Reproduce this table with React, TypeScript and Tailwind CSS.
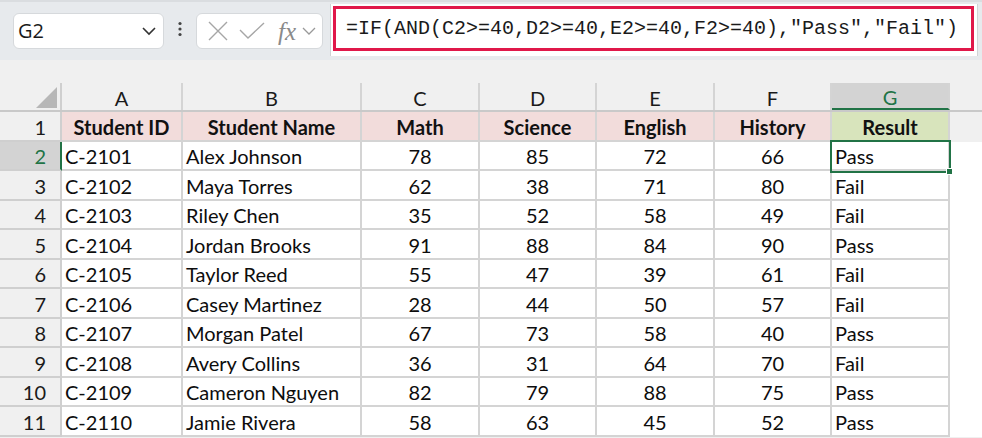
const cols = ["A", "B", "C", "D", "E", "F", "G"];
const widths = ["w-[121px]", "w-[179px]", "w-[118px]", "w-[117px]", "w-[118px]", "w-[117px]", "w-[118px]"];

const headers = ["Student ID", "Student Name", "Math", "Science", "English", "History", "Result"];

const rows: [string, string, number, number, number, number, string][] = [
  ["C-2101", "Alex Johnson", 78, 85, 72, 66, "Pass"],
  ["C-2102", "Maya Torres", 62, 38, 71, 80, "Fail"],
  ["C-2103", "Riley Chen", 35, 52, 58, 49, "Fail"],
  ["C-2104", "Jordan Brooks", 91, 88, 84, 90, "Pass"],
  ["C-2105", "Taylor Reed", 55, 47, 39, 61, "Fail"],
  ["C-2106", "Casey Martinez", 28, 44, 50, 57, "Fail"],
  ["C-2107", "Morgan Patel", 67, 73, 58, 40, "Pass"],
  ["C-2108", "Avery Collins", 36, 31, 64, 70, "Fail"],
  ["C-2109", "Cameron Nguyen", 82, 79, 88, 75, "Pass"],
  ["C-2110", "Jamie Rivera", 58, 63, 45, 52, "Pass"],
];

const cellFont = { fontFamily: "Lato, 'Liberation Sans', sans-serif" };

function Toolbar() {
  return (
    <div className="h-[60px] bg-[#e7eaed] border-t-2 border-[#dadde0] flex items-start relative" style={{ fontFamily: "'Open Sans', 'Noto Sans', sans-serif" }}>
      {/* name box */}
      <div className="ml-[13px] mt-[11px] w-[151px] h-[36px] bg-white rounded-md border border-[#d6d9dc] flex items-center justify-between pl-[4px] pr-[6px]">
        <span className="text-[20px] text-[#1a1a1a]">G2</span>
        <svg width="16" height="10" viewBox="0 0 16 10" fill="none">
          <path d="M2 2l6 6 6-6" stroke="#333" strokeWidth="1.6" />
        </svg>
      </div>
      <div className="w-[32px] h-[60px] flex items-center justify-center -mt-[3px]">
        <svg width="6" height="16" viewBox="0 0 6 16">
          <circle cx="3" cy="2.5" r="1.6" fill="#444" />
          <circle cx="3" cy="8" r="1.6" fill="#444" />
          <circle cx="3" cy="13.5" r="1.6" fill="#444" />
        </svg>
      </div>
      {/* fx box */}
      <div className="mt-[11px] w-[127px] h-[36px] bg-white rounded-md border border-[#d6d9dc] flex items-center pl-[10px]">
        <svg width="22" height="20" viewBox="0 0 22 20" fill="none">
          <path d="M2 1l18 18M20 1L2 19" stroke="#a6a6a6" strokeWidth="1.4" />
        </svg>
        <svg width="26" height="18" viewBox="0 0 26 18" fill="none" className="ml-[10px]">
          <path d="M1 8l8 8L25 1" stroke="#a6a6a6" strokeWidth="1.4" />
        </svg>
        <span className="ml-[13px] text-[25px] italic text-[#8a8a8a] leading-none" style={{ fontFamily: "'Liberation Serif', serif" }}>fx</span>
        <svg width="14" height="8" viewBox="0 0 14 8" fill="none" className="ml-[6px]">
          <path d="M1 1l6 6 6-6" stroke="#999" strokeWidth="1.3" />
        </svg>
      </div>
      {/* formula */}
      <div className="ml-[7px] mt-[2px] w-[648px] h-[52px] bg-white border-l border-r border-[#d0d3d6] relative">
        <div className="absolute left-[2px] top-[2px] w-[641px] h-[45px] border-[3px] border-[#e0184a] flex items-center pl-[10px]">
          <span className="text-[20px] text-[#1a1a1a] whitespace-nowrap" style={{ fontFamily: "'Liberation Mono', 'DejaVu Sans Mono', monospace" }}>
            =IF(AND(C2&gt;=40,D2&gt;=40,E2&gt;=40,F2&gt;=40),"Pass","Fail")
          </span>
        </div>
      </div>
    </div>
  );
}

export default function App() {
  return (
    <div className="w-[982px] h-[438px] overflow-hidden bg-[#f0f0f0]">
      <Toolbar />
      <div className="h-[23px]" />
      {/* column headers */}
      <div className="flex h-[29px] border-b-2 border-[#c9c9c9]" style={cellFont}>
        <div className="w-[62px] h-full border-r-2 border-[#cfcfcf] flex items-end justify-end pr-[2px] pb-[1px]">
          <svg width="23" height="23" viewBox="0 0 23 23">
            <path d="M22 1V22H1Z" fill="#b7b7b7" />
          </svg>
        </div>
        {cols.map((c, i) => (
          <div
            key={c}
            className={`${widths[i]} h-full border-r-2 border-[#d4d4d4] flex items-center justify-center pt-[2px] text-[20px] ${
              c === "G" ? "bg-[#d3d3d3] text-[#217346] border-b-2 border-b-[#217346] h-[29px]" : "text-[#1a1a1a]"
            }`}
          >
            {c}
          </div>
        ))}
      </div>
      <div style={cellFont}>
        {/* row 1 */}
        <div className="flex h-[29.5px]">
          <div className="w-[62px] border-r-2 border-b-2 border-[#cfcfcf] flex items-center justify-end pr-[14px] pt-[2px] text-[20px] text-[#1a1a1a]">1</div>
          {headers.map((h, i) => (
            <div
              key={h}
              className={`${widths[i]} border-r-2 border-b-2 border-[#d4d4d4] flex items-center justify-center pt-[2px] text-[20px] font-bold text-[#111] ${
                i === 6 ? "bg-[#d8e4bc]" : "bg-[#f2dcdb]"
              }`}
            >
              {h}
            </div>
          ))}
        </div>
        {rows.map((r, ri) => {
          const n = ri + 2;
          const sel = n === 2;
          return (
            <div key={n} className="flex h-[29.5px]">
              <div
                className={`w-[62px] border-b-2 border-[#cfcfcf] flex items-center justify-end pr-[14px] pt-[2px] text-[20px] ${
                  sel ? "bg-[#d3d3d3] text-[#217346] border-r-2 border-r-[#217346]" : "text-[#1a1a1a] border-r-2"
                }`}
              >
                {n}
              </div>
              {r.map((v, ci) => (
                <div
                  key={ci}
                  className={`${widths[ci]} relative bg-white border-r-2 border-b-2 border-[#d4d4d4] flex items-center pt-[2px] text-[20px] text-[#0d0d0d] ${
                    typeof v === "number" ? "justify-center" : "pl-[3px]"
                  } ${sel && ci === 6 ? "z-10" : ""}`}
                >
                  {v}
                  {sel && ci === 6 && (
                    <div className="absolute -left-[2px] -top-[2px] w-[121px] h-[33px] border-2 border-[#217346]">
                      <div className="absolute -right-[4px] -bottom-[4px] w-[7px] h-[7px] bg-[#217346] border border-white" />
                    </div>
                  )}
                </div>
              ))}
              <div className="flex-1 bg-white" />
            </div>
          );
        })}
      </div>
    </div>
  );
}
